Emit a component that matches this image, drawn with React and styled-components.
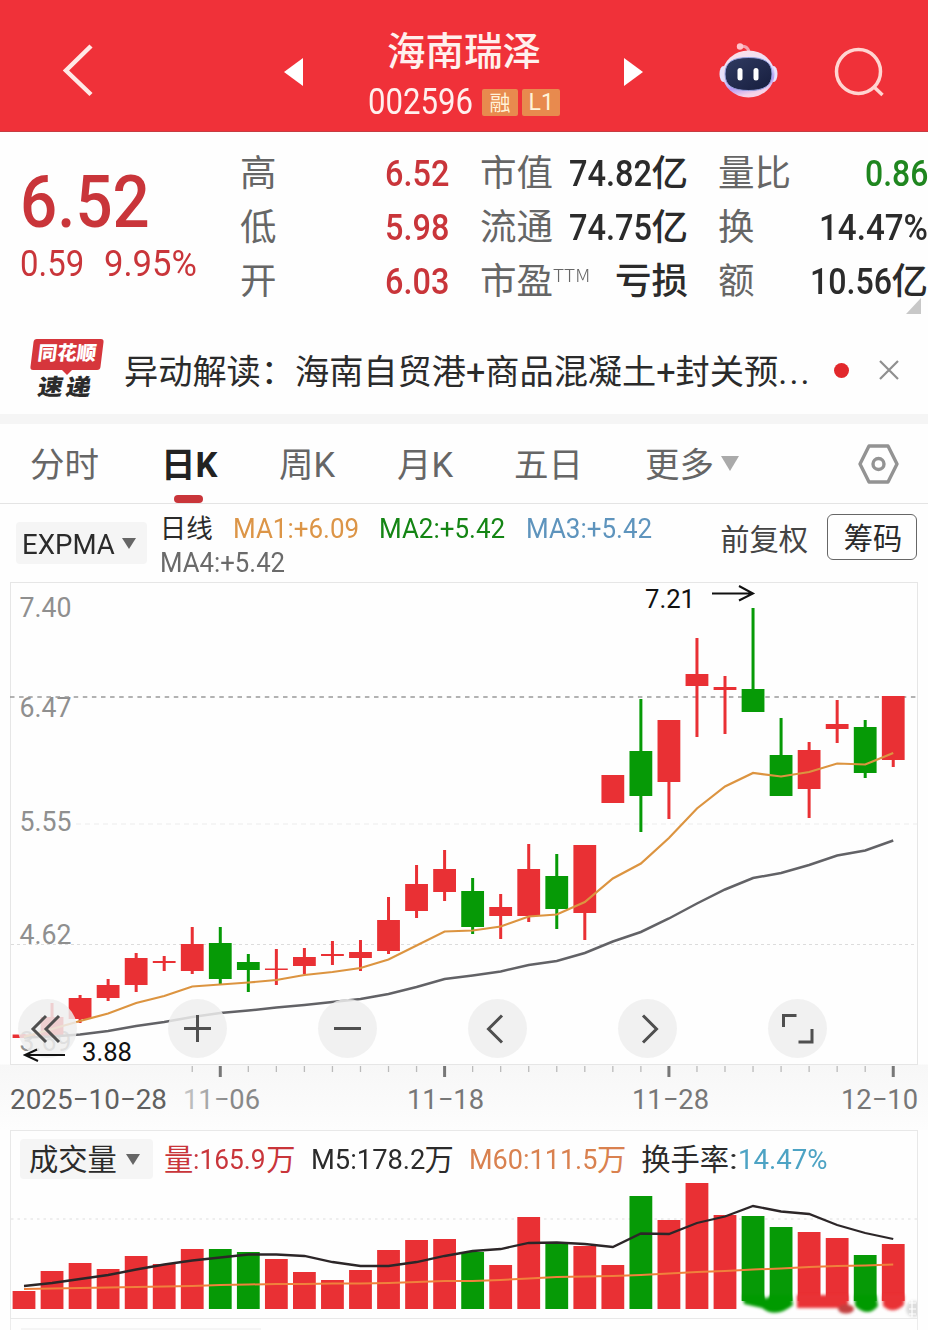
import React, {useLayoutEffect, useRef, useState} from 'react';
import styled, {createGlobalStyle} from 'styled-components';

const red = '#c9353a';
const green = '#1f861f';
const up = '#e93034';
const down = '#069a06';
const fonts = 'Roboto, "Noto Sans CJK SC", sans-serif';

const GlobalStyle = createGlobalStyle`
  body {
    margin: 0;
    background: #fefefe;
    font-family: ${fonts};
    overflow: hidden;
  }
  * {
    box-sizing: border-box;
  }
`;

const Page = styled.div`
  width: 928px;
  height: 1330px;
  overflow: hidden;
  display: flex;
  flex-direction: column;
  line-height: 1;
  color: #2b2b2b;
`;

const FitBox = styled.span`
  display: inline-block;
  flex: none;
  width: ${p => p.$w}px;
  font-size: ${p => p.$size}px;
  font-weight: ${p => p.$weight || 500};
  color: ${p => p.$color || 'inherit'};
  white-space: nowrap;
`;

const FitInner = styled.span`
  display: inline-block;
  transform-origin: 0 50%;
`;

// narrow numerals: squeezes its text to exactly w pixels
const Fit = ({w, size, weight, color, children}) => {
  const ref = useRef(null);
  const [scale, setScale] = useState(1);
  useLayoutEffect(() => {
    setScale(w / ref.current.offsetWidth);
  }, [w, children]);
  return <FitBox $w={w} $size={size} $weight={weight} $color={color}>
    <FitInner ref={ref} style={{transform: `scaleX(${scale})`}}>{children}</FitInner>
  </FitBox>;
};

const Header = styled.header`
  flex: none;
  height: 132px;
  background: #f03139;
  border-bottom: 1px solid #c63c42;
  display: grid;
  grid-template-columns: 272px 386px 174px 96px;
  color: #fff0ee;
`;

const BackCell = styled.div`
  padding: 43px 0 0 61px;
`;

const TitleCell = styled.div`
  display: grid;
  grid-template-columns: 42px 1fr 42px;
  align-items: start;
`;

const ArrowCell = styled.div`
  padding: 57px 0 0 ${p => p.$left}px;
`;

const TitleStack = styled.div`
  display: flex;
  flex-direction: column;
  align-items: center;
  padding: 33px 2px 0 0;
`;

const StockName = styled.div`
  font-size: 38.5px;
  font-weight: 500;
  height: 38px;
`;

const CodeRow = styled.div`
  display: flex;
  align-items: center;
  height: 37px;
  margin-top: 13px;
`;

const Badge = styled.span`
  width: ${p => p.$w}px;
  height: 27px;
  margin-left: ${p => p.$gap}px;
  border-radius: 2px;
  background: #e88a4e;
  color: #fff3d8;
  font-size: 21px;
  line-height: 28px;
  display: flex;
  justify-content: center;
`;

const RobotCell = styled.div`
  padding: 42px 0 0 60px;
`;

const SearchCell = styled.div`
  padding: 46px 0 0 1px;
`;

const Quote = styled.section`
  flex: none;
  height: 188px;
  display: grid;
  grid-template-columns: 240px 209px 239px 240px;
  padding-top: 14px;
  position: relative;
`;

const PriceCell = styled.div`
  padding: 20px 0 0 20px;
  color: ${red};
`;

const Price = styled.div`
  height: 73px;
`;

const Change = styled.div`
  display: flex;
  gap: 20px;
  margin-top: 7px;
`;

const StatColumn = styled.div`
  display: flex;
  flex-direction: column;
  padding-left: ${p => p.$left}px;
`;

const StatRow = styled.div`
  display: flex;
  justify-content: space-between;
  align-items: center;
  height: 54px;
  font-size: 36.5px;
`;

const StatLabel = styled.span`
  display: flex;
  padding-bottom: 4px;
  color: #666;
  font-family: "Noto Sans CJK SC", sans-serif;
  font-weight: 400;
`;

const StatValue = styled.span`
  display: flex;
  align-items: center;
  padding-top: 2px;
  font-weight: 500;
`;

const Ttm = styled.span`
  font-size: 18px;
  padding-top: 4px;
`;

const Corner = styled.svg`
  position: absolute;
  right: 7px;
  top: 166px;
`;

const News = styled.section`
  flex: none;
  height: 94px;
  display: flex;
  align-items: center;
  padding: 6px 28px 0 29px;
`;

const NewsLogo = styled.div`
  width: 75px;
  height: 62px;
  margin-right: 20px;
  display: flex;
  flex-direction: column;
  align-items: center;
`;

const LogoTop = styled.div`
  width: 70px;
  height: 31px;
  background: #d6363c;
  border-radius: 3px;
  transform: skewX(-7deg);
  color: #fff;
  font-size: 19.5px;
  font-weight: 900;
  line-height: 30px;
  text-align: center;
  white-space: nowrap;
`;

const LogoTip = styled.div`
  border: 5px solid transparent;
  border-top-color: #d6363c;
  border-bottom: 0;
`;

const LogoBottom = styled.div`
  font-size: 25px;
  font-weight: 900;
  letter-spacing: 3px;
  transform: skewX(-10deg) scaleY(0.9);
`;

const NewsText = styled.div`
  width: 692px;
  padding-top: 3px;
  font-size: 34.2px;
  line-height: 44px;
  white-space: nowrap;
`;

const Dots = styled.span`
  letter-spacing: 2.2px;
`;

const Dot = styled.div`
  width: 15px;
  height: 15px;
  margin: 0 29px 0 18px;
  border-radius: 50%;
  background: #e2282c;
`;

const Divider = styled.div`
  flex: none;
  height: 10px;
  background: #f5f5f5;
`;

const Tabs = styled.nav`
  flex: none;
  height: 80px;
  border-bottom: 1px solid #e4e4e4;
  display: grid;
  grid-template-columns: 131px 118px 118px 117px 131px 213px 1fr;
  padding-left: 30px;
`;

const Tab = styled.div`
  display: flex;
  align-items: center;
  position: relative;
  font-size: 34.5px;
  font-weight: ${p => p.$active ? 700 : 400};
  color: ${p => p.$active ? '#222' : '#666'};
  white-space: nowrap;
  ${p => p.$active && `&::after {
    content: '';
    position: absolute;
    left: 13px;
    bottom: 0;
    width: 29px;
    height: 8px;
    border-radius: 4px;
    background: ${red};
  }`}
`;

const Sunk = styled.span`
  padding-top: 4px;
`;

const Triangle = styled.i`
  margin-left: ${p => p.$gap}px;
  border: ${p => p.$w / 2}px solid transparent;
  border-top: ${p => p.$h}px solid ${p => p.$color};
  border-bottom: 0;
`;

const IndicatorBar = styled.section`
  flex: none;
  height: 78px;
  display: flex;
  padding: 10px 11px 0 16px;
`;

const Chip = styled.div`
  flex: none;
  display: flex;
  align-items: center;
  width: ${p => p.$w}px;
  height: ${p => p.$h}px;
  padding-left: ${p => p.$pad}px;
  border-radius: 4px;
  background: #f5f5f5;
  font-size: 29.3px;
`;

const ChipSlot = styled.div`
  width: 144px;
  padding-top: 8px;
`;

const Averages = styled.div`
  width: 561px;
  font-size: 26.5px;
`;

const AverageLine = styled.div`
  display: flex;
  align-items: center;
  height: ${p => p.$h}px;
`;

const Gap = styled.span`
  flex: none;
  width: ${p => p.$w}px;
`;

const Adjust = styled.div`
  width: 107px;
  padding-top: 12px;
  font-size: 29.3px;
  color: #444;
`;

const ChipsButton = styled.button`
  width: 90px;
  height: 46px;
  padding: 2px 0 0 2px;
  border: 1px solid #666;
  border-radius: 6px;
  background: none;
  color: #2b2b2b;
  font-family: ${fonts};
  font-size: 29.3px;
  line-height: 44px;
`;

const ChartArea = styled.section`
  flex: none;
  position: relative;
  height: 548px;
  background: linear-gradient(#fefefe 0 482px, #f7f7f7 483px, #fdfdfd 548px);
`;

const ChartSvg = styled.svg`
  display: block;
  font-family: ${fonts};
`;

const Controls = styled.div`
  position: absolute;
  left: 18px;
  top: 417px;
  display: flex;
  gap: 91px;
`;

const RoundButton = styled.div`
  width: 59px;
  height: 59px;
  border-radius: 50%;
  background: rgba(238, 238, 238, 0.84);
`;

const Volume = styled.section`
  flex: none;
  width: 908px;
  height: 189px;
  margin-left: 10px;
  border: 1px solid #e8e8e8;
`;

const VolumeHead = styled.div`
  display: flex;
  align-items: center;
  height: 40px;
  margin: 8px 0 0 9px;
  font-size: 29.3px;
`;

const Tinted = styled.span`
  display: flex;
  align-items: center;
  padding-top: 3px;
  color: ${p => p.$color};
`;

const Next = styled.section`
  flex: none;
  width: 908px;
  height: 12px;
  margin-left: 10px;
  padding: 9px 0 0 10px;
  border: 1px solid #ececec;
  border-top: 0;
`;

const NextChip = styled.div`
  width: 240px;
  height: 3px;
  background: #f5f5f5;
`;

// high, low, body top, body bottom, falling
const candles = [
  [1034, 1038, 1034.5, 1038],
  [1003, 1036, 1017, 1036],
  [995, 1023, 998, 1019],
  [979, 1001, 985, 998],
  [953, 992, 958, 985],
  [956, 971, 961, 963],
  [927, 974, 944, 971],
  [927, 984, 943, 979, 1],
  [954, 992, 962, 970, 1],
  [949, 985, 968.5, 970],
  [948, 974, 957, 966],
  [941, 965, 954, 956],
  [940, 971, 952, 958],
  [897, 954, 920, 951],
  [865, 918, 884, 911],
  [850, 901, 869, 892],
  [878, 934, 891, 927, 1],
  [894, 939, 907, 916],
  [844, 922, 869, 916],
  [854, 929, 876, 909, 1],
  [845, 940, 845, 913],
  [775, 803, 775, 803],
  [699, 832, 751, 796, 1],
  [720, 819, 720, 782],
  [638, 737, 674, 686],
  [676, 734, 687, 690],
  [608, 712, 689, 712, 1],
  [718, 796, 755, 796, 1],
  [742, 818, 750, 789],
  [700, 743, 724, 729],
  [720, 778, 727, 773, 1],
  [696, 767, 696, 760],
];

const ma1 = [1037, 1029, 1021, 1013.5, 1003, 996, 986.5, 984.5, 982.5, 980, 975, 972, 968, 959.5, 945.5, 931.5, 930.5, 926.5, 916.5, 914.5, 902, 878.5, 863.5, 838, 808.5, 786.5, 773, 776.5, 772, 763.5, 764.5, 753];
const ma4 = [1037.5, 1036.5, 1034.5, 1031, 1026, 1022, 1017, 1013, 1010.5, 1007.5, 1005, 1002, 999, 994, 987, 979, 975.5, 971.5, 965, 961, 953, 941.5, 932, 918.5, 903.5, 889.5, 878, 873, 865, 855.5, 850.5, 840.5];

const volumes = [1291, 1271, 1263, 1269, 1256, 1264, 1249, 1249, 1252, 1259, 1272, 1280, 1270, 1250, 1240, 1239, 1252, 1265, 1217, 1243, 1246, 1265, 1196, 1220, 1183, 1215, 1216, 1227, 1232, 1238, 1255, 1244];
const volM5 = [1286, 1283, 1279, 1275, 1269.5, 1264.5, 1260.5, 1257.5, 1254.5, 1254.5, 1256, 1262, 1266, 1266, 1262, 1256, 1251, 1249, 1243, 1242.5, 1244, 1247, 1233.5, 1234, 1223, 1216.5, 1206, 1211.5, 1214, 1225, 1233, 1239];
const volM60 = [1289, 1288.5, 1288, 1287.5, 1287, 1286.5, 1286, 1285, 1284.5, 1284, 1284, 1283.5, 1283.5, 1283, 1282, 1281, 1281, 1280, 1278.5, 1277, 1276.5, 1276, 1275, 1273.5, 1272, 1271, 1269.5, 1268.5, 1267, 1266, 1265.5, 1264.5];

const cx = i => 24 + 28.04 * i;
const points = list => list.map((y, i) => `${cx(i)},${y}`).join(' ');
const tone = i => candles[i][4] ? down : up;

const Label = ({x, y, w, size = 28.5, weight = 450, fill = '#8f8f8f', children}) =>
  <text x={x} y={y} fontSize={size} fontWeight={weight} fill={fill} textLength={w} lengthAdjust="spacingAndGlyphs">{children}</text>;

const KLine = () => <ChartSvg width="928" height="548" viewBox="0 582 928 548">
  <defs>
    <linearGradient id="fade">
      <stop offset="0" stopColor="#c8c8c8" />
      <stop offset="0.6" stopColor="#888" />
    </linearGradient>
  </defs>
  <rect x="10.5" y="582.5" width="907" height="482" fill="none" stroke="#e6e6e6" />
  <path d="M76 824H917" stroke="#ececec" strokeDasharray="5 4" />
  <path d="M11 944.5H917" stroke="#dcdcdc" strokeDasharray="3 3" />
  <Label x="19.5" y="617" w="52">7.40</Label>
  <Label x="19.5" y="717" w="52">6.47</Label>
  <Label x="19.5" y="831" w="52">5.55</Label>
  <Label x="19.5" y="944" w="52">4.62</Label>
  <Label x="19.5" y="1051" w="52">3.69</Label>
  <path d="M10 697H917" stroke="#999" strokeWidth="1.6" strokeDasharray="4.5 4.6" />
  {candles.map(([high, low, top, bottom], i) => <g key={i} fill={tone(i)}>
    <rect x={cx(i) - 1.5} y={high} width="3" height={low - high} />
    <rect x={cx(i) - 11.4} y={top} width="22.8" height={bottom - top} />
  </g>)}
  <polyline points={points(ma4)} fill="none" stroke="#626266" strokeWidth="2.5" />
  <polyline points={points(ma1)} fill="none" stroke="#dc9440" strokeWidth="2.2" />
  <Label x="645" y="607.5" w="50" size="25" weight={400} fill="#111">7.21</Label>
  <path d="M712 593.5H753M739 586L753 593.5L739 600.5" fill="none" stroke="#111" strokeWidth="2" />
  {candles.map((c, i) => i > 5 && <path
    key={i}
    d={`M${cx(i)} 1066V${i % 8 === 7 ? 1077 : 1072}`}
    stroke={i % 8 === 7 ? '#777' : '#bbb'}
    strokeWidth={i % 8 === 7 ? 3 : 1.3}
  />)}
  <Label x="10" y="1108.5" w="157" size="28" fill="#606060">2025−10−28</Label>
  <Label x="183" y="1108.5" w="77" size="28" fill="url(#fade)">11−06</Label>
  <Label x="407" y="1108.5" w="77" size="28" fill="#777">11−18</Label>
  <Label x="632" y="1108.5" w="77" size="28" fill="#777">11−28</Label>
  <Label x="841" y="1108.5" w="77" size="28" fill="#777">12−10</Label>
</ChartSvg>;

// sits above the round buttons
const LowMark = styled.svg`
  position: absolute;
  left: 20px;
  top: 448px;
  overflow: visible;
`;

const VolumeChart = () => <ChartSvg width="906" height="139" viewBox="11 1179 906 139">
  <defs>
    <filter id="smear" x="-10%" y="-50%" width="120%" height="200%">
      <feGaussianBlur stdDeviation="1.8" />
    </filter>
  </defs>
  <path d="M11 1219H917" stroke="#dedede" strokeDasharray="2.5 4" />
  {volumes.map((y, i) => <rect
    key={i}
    x={cx(i) - 11.4}
    y={y}
    width="22.8"
    height={(i > 25 ? 1301 : 1309) - y}
    fill={tone(i)}
  />)}
  <polyline points={points(volM5)} fill="none" stroke="#2c2628" strokeWidth="2.3" />
  <polyline points={points(volM60)} fill="none" stroke="#f0813c" strokeWidth="2" />
  <g filter="url(#smear)">
    <path d="M743 1295H763L766 1299L771 1295H791L793 1305Q776 1319 762 1308L744 1304Z" fill={down} />
    <path d="M797 1295H848V1308H797Z" fill={up} />
    <ellipse cx="846" cy="1309" rx="8" ry="4.5" fill="#c2403f" />
    <path d="M855 1295H876L878 1306Q868 1318 855 1306Z" fill={down} />
    <path d="M883 1295H904L904 1305Q893 1315 883 1306Z" fill={up} />
    <circle cx="914" cy="1309" r="8" fill="#dcdcdc" />
  </g>
  <path d="M912 1300V1317M909 1303H916M909 1309H916M909 1314H916" stroke="#fff" strokeWidth="1.2" />
</ChartSvg>;

const Icon = ({d, size = 59, width = 3}) =>
  <svg width={size} height={size} viewBox={`0 0 ${size} ${size}`} fill="none" stroke="#4f4f4f" strokeWidth={width}>
    <path d={d} />
  </svg>;

const controls = [
  'M28 17L15 30L28 43M41 17L28 30L41 43',
  'M16 29.5H43M29.5 16V43',
  'M16 29.5H43',
  'M34 16.5L20.5 30L34 43.5',
  'M25 16.5L38.5 30L25 43.5',
  'M15.5 28V16.5H28.5M30.5 43H44V30',
];

const Robot = () => <svg width="62" height="58" viewBox="718 42 62 58">
  <defs>
    <linearGradient id="shell" x1="0" y1="0" x2="0.3" y2="1">
      <stop offset="0" stopColor="#ffdfe5" />
      <stop offset="0.55" stopColor="#e6e0fb" />
      <stop offset="0.8" stopColor="#b59cf5" />
      <stop offset="1" stopColor="#f6d3e8" />
    </linearGradient>
    <linearGradient id="face" x1="0" y1="0" x2="1" y2="1">
      <stop offset="0" stopColor="#303b62" />
      <stop offset="1" stopColor="#161d3d" />
    </linearGradient>
  </defs>
  <path d="M739 47C744 45 748 47 749 52" fill="none" stroke="#f4a3b0" strokeWidth="3" />
  <circle cx="740" cy="46.5" r="3.2" fill="#ffc3cb" />
  <ellipse cx="723.5" cy="74" rx="4" ry="8" fill="#e8e3fd" />
  <ellipse cx="773.5" cy="74" rx="4" ry="8" fill="#e8e3fd" />
  <ellipse cx="748.5" cy="74" rx="26" ry="23.5" fill="url(#shell)" />
  <path d="M725 74C725 62 733 57.5 748.5 57.5S772 62 772 74S764 90.5 748.5 90.5S725 86 725 74Z" fill="url(#face)" stroke="#99a4e2" strokeWidth="1" />
  <rect x="737.5" y="68" width="5" height="12.5" rx="2.5" fill="#fff" />
  <rect x="753.5" y="68" width="5" height="12.5" rx="2.5" fill="#fff" />
</svg>;

const Stat = ({label, sup, children}) => <StatRow>
  <StatLabel>{label}{sup && <Ttm><Fit w={37} size={18} weight={300}>{sup}</Fit></Ttm>}</StatLabel>
  <StatValue>{children}</StatValue>
</StatRow>;

export default () => {
  return <Page>
    <GlobalStyle />
    <Header>
      <BackCell>
        <svg width="34" height="56" fill="none" stroke="#ffe9e6" strokeWidth="4.5"><path d="M30 3L5 27.5L30 51.5" /></svg>
      </BackCell>
      <TitleCell>
        <ArrowCell $left={11}>
          <svg width="21" height="30"><path d="M20 1V29L1 15Z" fill="#fff" /></svg>
        </ArrowCell>
        <TitleStack>
          <StockName>海南瑞泽</StockName>
          <CodeRow>
            <Fit w={105} size={36.5} weight={450}>002596</Fit>
            <Badge $w={36} $gap={9}>融</Badge>
            <Badge $w={38} $gap={4}><Fit w={25} size={23} weight={400}>L1</Fit></Badge>
          </CodeRow>
        </TitleStack>
        <ArrowCell $left={7}>
          <svg width="21" height="30"><path d="M1 1V29L20 15Z" fill="#fff" /></svg>
        </ArrowCell>
      </TitleCell>
      <RobotCell><Robot /></RobotCell>
      <SearchCell>
        <svg width="54" height="54" fill="none" stroke="#ffd5d1" strokeWidth="3.5">
          <circle cx="25.5" cy="25.5" r="22" />
          <path d="M40.5 40.5L49.5 49" />
        </svg>
      </SearchCell>
    </Header>
    <Quote>
      <PriceCell>
        <Price><Fit w={130} size={73}>6.52</Fit></Price>
        <Change>
          <Fit w={64} size={36.5} weight={450}>0.59</Fit>
          <Fit w={93} size={36.5} weight={450}>9.95%</Fit>
        </Change>
      </PriceCell>
      <StatColumn $left={0}>
        <Stat label="高"><Fit w={64} size={36.5} color={red}>6.52</Fit></Stat>
        <Stat label="低"><Fit w={64} size={36.5} color={red}>5.98</Fit></Stat>
        <Stat label="开"><Fit w={64} size={36.5} color={red}>6.03</Fit></Stat>
      </StatColumn>
      <StatColumn $left={31}>
        <Stat label="市值"><Fit w={83} size={36.5}>74.82</Fit>亿</Stat>
        <Stat label="流通"><Fit w={83} size={36.5}>74.75</Fit>亿</Stat>
        <Stat label="市盈" sup="TTM">亏损</Stat>
      </StatColumn>
      <StatColumn $left={30}>
        <Stat label="量比"><Fit w={63} size={36.5} color={green}>0.86</Fit></Stat>
        <Stat label="换"><Fit w={109} size={36.5}>14.47%</Fit></Stat>
        <Stat label="额"><Fit w={82} size={36.5}>10.56</Fit>亿</Stat>
      </StatColumn>
      <Corner width="15" height="16"><path d="M15 0V16H0Z" fill="#c8c8c8" /></Corner>
    </Quote>
    <News>
      <NewsLogo>
        <LogoTop>同花顺</LogoTop>
        <LogoTip />
        <LogoBottom>速递</LogoBottom>
      </NewsLogo>
      <NewsText>异动解读：海南自贸港+商品混凝土+封关预<Dots>...</Dots></NewsText>
      <Dot />
      <svg width="22" height="22" stroke="#8f8f8f" strokeWidth="2.2"><path d="M2 2L20 20M20 2L2 20" /></svg>
    </News>
    <Divider />
    <Tabs>
      <Tab><Sunk>分时</Sunk></Tab>
      <Tab $active><Sunk>日K</Sunk></Tab>
      <Tab><Sunk>周K</Sunk></Tab>
      <Tab><Sunk>月K</Sunk></Tab>
      <Tab><Sunk>五日</Sunk></Tab>
      <Tab><Sunk>更多</Sunk><Triangle $gap={7} $w={18} $h={15} $color="#aaa" /></Tab>
      <Tab>
        <svg width="42" height="42" fill="none" stroke="#939393" strokeWidth="3.4" strokeLinejoin="round">
          <path d="M11 3H30L39 21L30 39H11L2 21Z" />
          <circle cx="20.5" cy="21" r="5.5" />
        </svg>
      </Tab>
    </Tabs>
    <IndicatorBar>
      <ChipSlot>
        <Chip $w={131} $h={42} $pad={6}>
          <Sunk><Fit w={93} size={28.5} weight={400}>EXPMA</Fit></Sunk>
          <Triangle $gap={7} $w={15} $h={11} $color="#666" />
        </Chip>
      </ChipSlot>
      <Averages>
        <AverageLine $h={31}>
          日线
          <Gap $w={20} />
          <Fit w={126} size={27} weight={450} color="#dc9547">MA1:+6.09</Fit>
          <Gap $w={20} />
          <Fit w={126} size={27} weight={450} color="#148514">MA2:+5.42</Fit>
          <Gap $w={21} />
          <Fit w={126} size={27} weight={450} color="#5e94bd">MA3:+5.42</Fit>
        </AverageLine>
        <AverageLine $h={37}>
          <Fit w={125} size={27} weight={450} color="#6a6a6a">MA4:+5.42</Fit>
        </AverageLine>
      </Averages>
      <Adjust>前复权</Adjust>
      <ChipsButton>筹码</ChipsButton>
    </IndicatorBar>
    <ChartArea>
      <KLine />
      <Controls>
        {controls.map(d => <RoundButton key={d}><Icon d={d} /></RoundButton>)}
      </Controls>
      <LowMark width="120" height="40" viewBox="20 1030 120 40">
        <Label x="82" y="1060.5" w="50" size="25" weight={400} fill="#111">3.88</Label>
        <path d="M65 1055H25M37 1049.5L25 1055L38 1061" fill="none" stroke="#111" strokeWidth="2" />
      </LowMark>
    </ChartArea>
    <Volume>
      <VolumeHead>
        <Chip $w={133} $h={40} $pad={9}>
          <Sunk>成交量</Sunk>
          <Triangle $gap={9} $w={15} $h={11} $color="#666" />
        </Chip>
        <Gap $w={11} />
        <Tinted $color={red}>量<Fit w={73} size={28.5} weight={450}>:165.9</Fit>万</Tinted>
        <Gap $w={15} />
        <Tinted $color="#2b2b2b"><Fit w={114} size={28.5} weight={450}>M5:178.2</Fit>万</Tinted>
        <Gap $w={15} />
        <Tinted $color="#d9814f"><Fit w={128} size={28.5} weight={450}>M60:111.5</Fit>万</Tinted>
        <Gap $w={15} />
        <Tinted $color="#2b2b2b">换手率<Fit w={9} size={28.5} weight={450}>:</Fit></Tinted>
        <Tinted $color="#4da3c4"><Fit w={89} size={28.5} weight={450}>14.47%</Fit></Tinted>
      </VolumeHead>
      <VolumeChart />
    </Volume>
    <Next><NextChip /></Next>
  </Page>;
};
